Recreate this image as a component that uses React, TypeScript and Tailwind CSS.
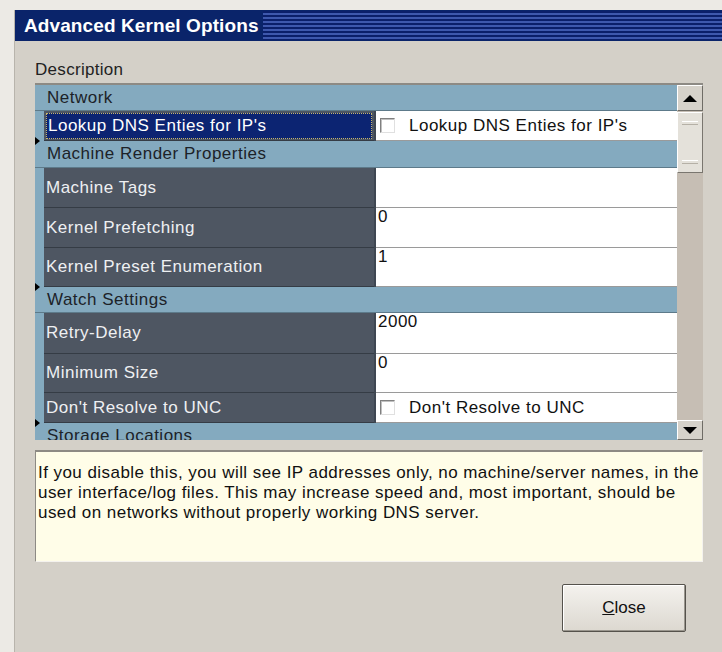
import React from "react";

type Row =
  | { kind: "cat"; label: string; h: number; mark?: boolean }
  | { kind: "prop"; label: string; h: number; value?: string; check?: boolean; selected?: boolean };

const rows: Row[] = [
  { kind: "cat", label: "Network", h: 26 },
  { kind: "prop", label: "Lookup DNS Enties for IP's", h: 30, check: true, selected: true },
  { kind: "cat", label: "Machine Render Properties", h: 27, mark: true },
  { kind: "prop", label: "Machine Tags", h: 40, value: "" },
  { kind: "prop", label: "Kernel Prefetching", h: 40, value: "0" },
  { kind: "prop", label: "Kernel Preset Enumeration", h: 39, value: "1" },
  { kind: "cat", label: "Watch Settings", h: 26, mark: true },
  { kind: "prop", label: "Retry-Delay", h: 41, value: "2000" },
  { kind: "prop", label: "Minimum Size", h: 39, value: "0" },
  { kind: "prop", label: "Don't Resolve to UNC", h: 30, check: true },
  { kind: "cat", label: "Storage Locations", h: 26, mark: true },
];

const Marker = () => (
  <span className="absolute left-0 -top-[4px] w-0 h-0 border-y-[4px] border-y-transparent border-l-[5px] border-l-black" />
);

const Checkbox = () => (
  <span className="w-[15px] h-[15px] bg-white border border-t-[#808080] border-l-[#808080] border-b-[#e0e0e0] border-r-[#e0e0e0] shadow-[inset_1px_1px_0_#c0c0c0] shrink-0" />
);

const GridRow = ({ row }: { row: Row }) => {
  if (row.kind === "cat") {
    return (
      <div
        className="relative flex bg-[#84aabf] border-b border-[#5d7a8a] shrink-0"
        style={{ height: row.h }}
      >
        {row.mark && <Marker />}
        <div className="w-[9px] shrink-0" />
        <div className="pl-[3px] pt-[2px] text-[17px] tracking-[0.5px] text-[#1c2228] leading-[21px] whitespace-nowrap">
          {row.label}
        </div>
      </div>
    );
  }
  return (
    <div className="flex bg-[#84aabf] shrink-0" style={{ height: row.h }}>
      <div className="w-[9px] shrink-0" />
      <div className="w-[330px] shrink-0 bg-[#4e5662] border-b border-[#353c45] flex items-center pl-[2px] text-[17px] tracking-[0.5px]">
        {row.selected ? (
          <div className="h-[26px] w-[326px] bg-[#0c2472] border border-dotted border-[#c9b66a] flex items-center px-[1px] text-white">
            {row.label}
          </div>
        ) : (
          <span className="text-[#eef0f2]">{row.label}</span>
        )}
      </div>
      <div className="w-[2px] shrink-0 bg-[#3f4752]" />
      <div className="flex-1 bg-white border-b border-[#9a9a9a] text-[17px] tracking-[0.5px]">
        {row.check ? (
          <div className="h-full flex items-center gap-[14px] pl-[4px]">
            <Checkbox />
            <span className="text-[#111]">{row.label}</span>
          </div>
        ) : (
          <div className="pl-[2px] leading-[18px] text-[#111]">{row.value}</div>
        )}
      </div>
    </div>
  );
};

const ScrollBar = () => (
  <div className="w-[26px] shrink-0 flex flex-col bg-[#c6beb4]">
    <div className="h-[26px] bg-[#d6d2ca] border border-t-white border-l-white border-r-[#6f6c66] border-b-[#6f6c66] flex items-center justify-center">
      <span className="w-0 h-0 border-x-[7px] border-x-transparent border-b-[7px] border-b-black" />
    </div>
    <div className="h-[61px] mt-[1px] bg-[#e4e1da] border border-t-white border-l-white border-r-[#7a766f] border-b-[#7a766f] flex flex-col justify-between py-[8px] px-[4px]">
      <div className="flex flex-col gap-[2px]">
        <span className="h-px bg-white" />
        <span className="h-px bg-[#b5b0a6]" />
      </div>
      <div className="flex flex-col gap-[2px]">
        <span className="h-px bg-white" />
        <span className="h-px bg-[#b5b0a6]" />
      </div>
    </div>
    <div className="flex-1" />
    <div className="h-[20px] bg-[#d6d2ca] border border-t-white border-l-white border-r-[#6f6c66] border-b-[#6f6c66] flex items-center justify-center">
      <span className="w-0 h-0 border-x-[7px] border-x-transparent border-t-[7px] border-t-black" />
    </div>
  </div>
);

export default function App() {
  return (
    <div
      className="w-[722px] h-[652px] overflow-hidden bg-[#eceae5] pt-[10px] pl-[14px] flex"
      style={{ fontFamily: '"Liberation Sans", Arial, sans-serif' }}
    >
      <div className="flex-1 flex flex-col bg-[#d4d0c8] border-l border-[#b8b4ac]">
        {/* caption */}
        <div className="h-[31px] flex bg-[#0a246a] shrink-0">
          <div className="pl-[9px] pr-[4px] pt-[2px] flex items-center text-[19px] font-bold text-white tracking-[0.1px]">
            Advanced Kernel Options
          </div>
          <div className="flex-1 my-[1px] bg-[repeating-linear-gradient(180deg,#0b1f6a_0px,#0b1f6a_2px,#3e58ad_2px,#3e58ad_4px)]" />
        </div>

        <div className="flex-1 flex flex-col pl-[20px] pr-[19px]">
          <div className="pt-[16px] h-[42px] text-[17px] tracking-[0.3px] text-[#222]">Description</div>

          {/* property grid */}
          <div className="h-[357px] flex border-t-2 border-[#8d8a84] overflow-hidden shrink-0">
            <div className="relative flex-1 flex flex-col overflow-hidden">
              <span className="absolute left-0 top-0 w-[3px] h-[3px] bg-black" />
              {rows.map((r, i) => (
                <GridRow key={i} row={r} />
              ))}
            </div>
            <ScrollBar />
          </div>

          {/* description box */}
          <div className="mt-[10px] h-[112px] bg-[#fffde8] border-t-2 border-l border-[#8d8a84] border-r border-r-[#f4f2ee] border-b border-b-[#f4f2ee] px-[2px] pt-[11px] text-[17px] leading-[20px] text-[#111] tracking-[0.45px] whitespace-nowrap shrink-0">
            If you disable this, you will see IP addresses only, no machine/server names, in the
            <br />
            user interface/log files. This may increase speed and, most important, should be
            <br />
            used on networks without properly working DNS server.
          </div>

          <div className="flex justify-end pr-[17px] pt-[22px]">
            <button className="w-[124px] h-[48px] bg-[linear-gradient(180deg,#f4f2ee,#dcd8d0)] border border-[#55524c] rounded-[2px] shadow-[inset_-1px_-1px_0_#9a968e,inset_1px_1px_0_#ffffff] text-[17px] text-[#111]">
              <span className="underline">C</span>lose
            </button>
          </div>
        </div>
      </div>
    </div>
  );
}
